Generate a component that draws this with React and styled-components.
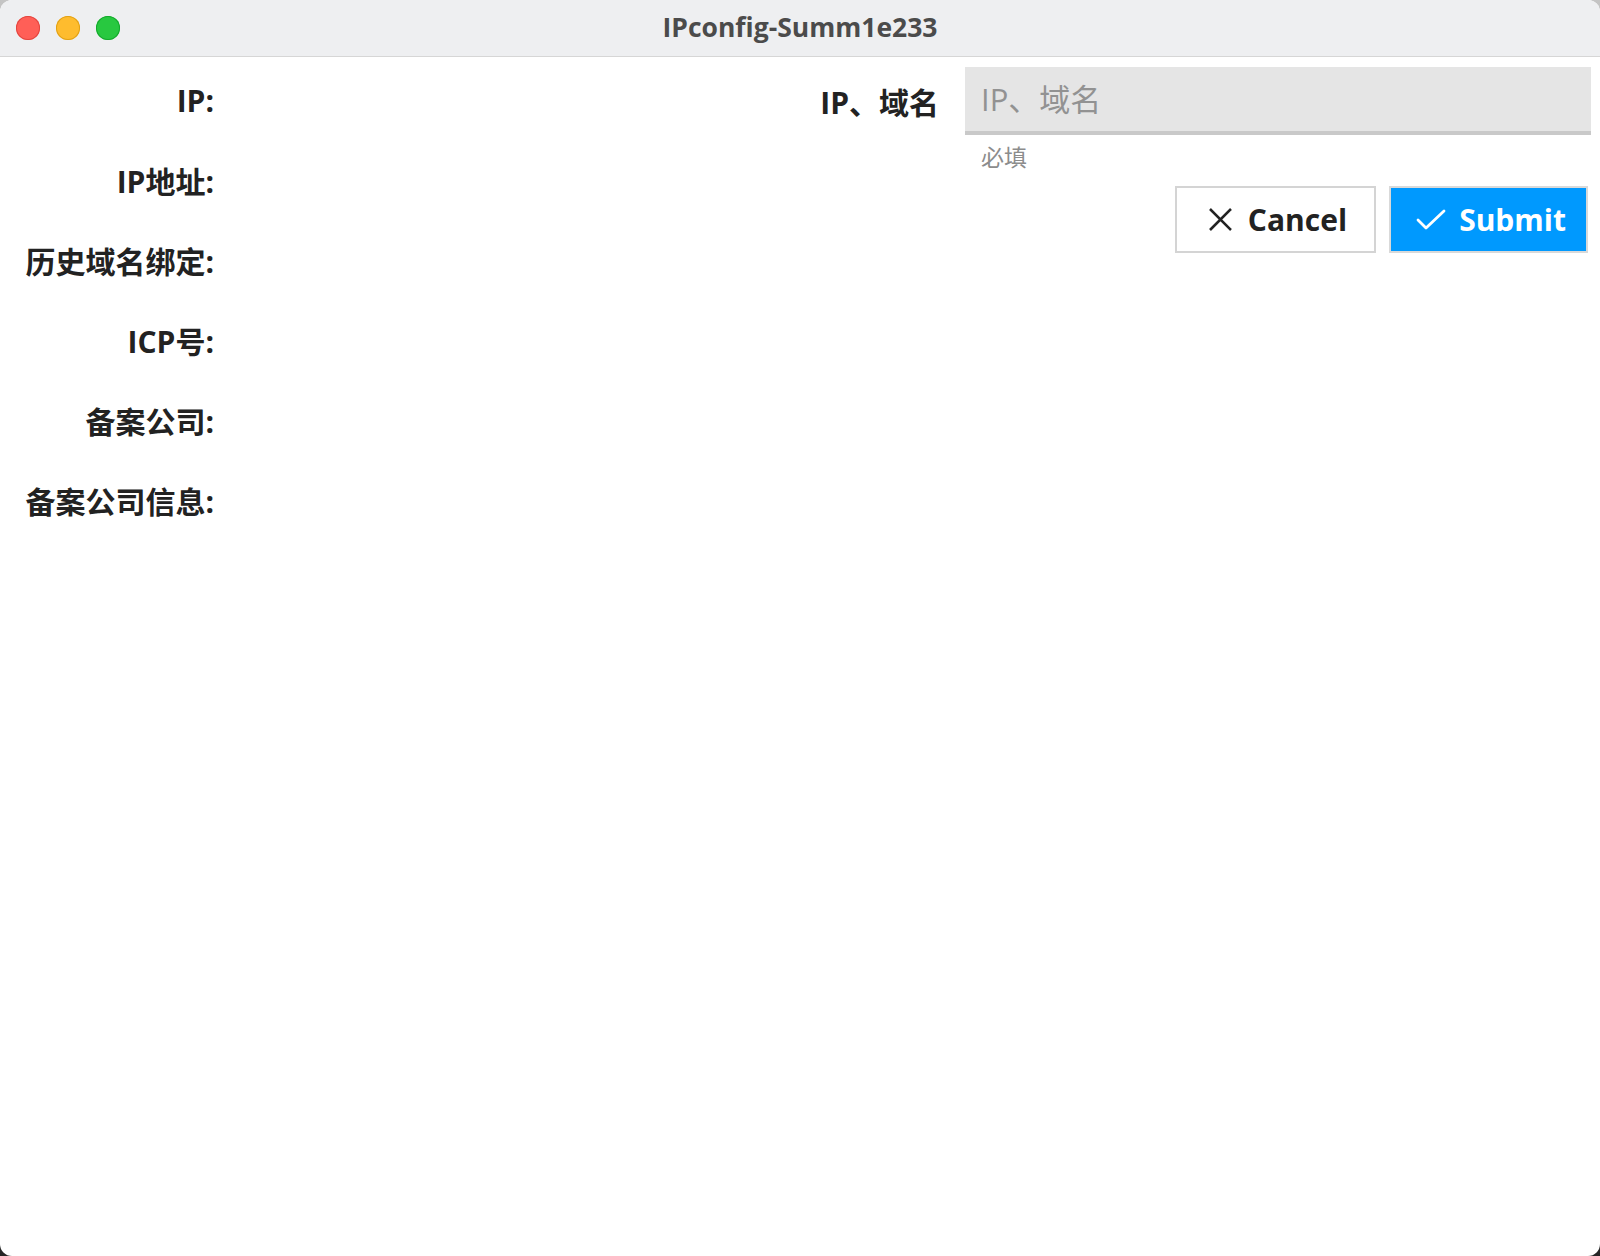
import React, { useState } from 'react';
import styled, { createGlobalStyle } from 'styled-components';

const GlobalStyle = createGlobalStyle`
  html, body {
    margin: 0;
    padding: 0;
    height: 100%;
  }
  body {
    background: linear-gradient(180deg, #c4c4c4 0%, #8a8a8a 50%, #262626 100%);
    font-family: "Open Sans", "Noto Sans CJK SC", sans-serif;
  }
  #root {
    height: 100%;
  }
`;

const FONT = '"Open Sans", "Noto Sans CJK SC", sans-serif';

const Window = styled.div`
  height: 100vh;
  display: flex;
  flex-direction: column;
  background: #ffffff;
  border-radius: 12px;
  overflow: hidden;
`;

const TitleBar = styled.div`
  height: 57px;
  flex-shrink: 0;
  display: grid;
  grid-template-columns: 1fr auto 1fr;
  align-items: center;
  background: #eeeff1;
  border-bottom: 1px solid #d6d6d6;
  box-sizing: border-box;
`;

const Lights = styled.div`
  display: flex;
  gap: 16px;
  padding-left: 16px;
`;

const Light = styled.span`
  width: 24px;
  height: 24px;
  border-radius: 50%;
  background: ${(p) => p.color};
  box-shadow: inset 0 0 0 1px ${(p) => p.edge};
`;

const Title = styled.div`
  font-family: ${FONT};
  font-size: 26.5px;
  font-weight: 700;
  color: #4b4b4b;
  margin-top: -2px;
`;

const Content = styled.div`
  flex: 1;
  display: flex;
  align-items: flex-start;
`;

const LabelColumn = styled.div`
  width: 214px;
  padding-top: 3px;
  display: flex;
  flex-direction: column;
`;

const InfoLabel = styled.div`
  height: 80px;
  display: flex;
  align-items: center;
  justify-content: flex-end;
  font-family: ${FONT};
  font-size: 30px;
  font-weight: 700;
  color: #222222;
  white-space: nowrap;
`;

const Spacer = styled.div`
  flex: 1;
`;

const FormPanel = styled.div`
  display: flex;
  flex-direction: column;
  padding: 10px 9px 0 0;
`;

const FieldRow = styled.div`
  display: flex;
  align-items: flex-start;
`;

const FieldLabel = styled.label`
  height: 68px;
  display: flex;
  align-items: center;
  margin-right: 26px;
  font-family: ${FONT};
  font-size: 30px;
  font-weight: 700;
  color: #222222;
  white-space: nowrap;
`;

const FieldBox = styled.div`
  width: 626px;
  display: flex;
  flex-direction: column;
`;

const Input = styled.input`
  height: 68px;
  box-sizing: border-box;
  border: none;
  border-bottom: 4px solid #c9c9c9;
  background: #e5e5e5;
  padding: 0 16px;
  font-family: ${FONT};
  font-size: 31px;
  font-weight: 400;
  color: #222;
  outline: none;

  &::placeholder {
    color: #929292;
  }
`;

const Helper = styled.div`
  margin-top: 7px;
  padding-left: 16px;
  font-family: ${FONT};
  font-size: 23px;
  line-height: 30px;
  color: #8c8c8c;
`;

const ButtonRow = styled.div`
  display: flex;
  justify-content: flex-end;
  gap: 13px;
  margin-top: 14px;
  padding-right: 3px;
`;

const Button = styled.button`
  height: 67px;
  box-sizing: border-box;
  display: flex;
  align-items: center;
  justify-content: center;
  gap: ${(p) => (p.primary ? '13px' : '16px')};
  padding: ${(p) => (p.primary ? '0 20px 0 25px' : '0 27px 0 32px')};
  border: 2px solid ${(p) => (p.primary ? '#d9d9d9' : '#d4d4d4')};
  background: ${(p) => (p.primary ? '#0099fe' : '#ffffff')};
  color: ${(p) => (p.primary ? '#ffffff' : '#222222')};
  font-family: ${FONT};
  font-size: 30px;
  font-weight: 700;
  cursor: pointer;
`;

const labels = ['IP:', 'IP地址:', '历史域名绑定:', 'ICP号:', '备案公司:', '备案公司信息:'];

const CloseIcon = () => (
  <svg width="23" height="23" viewBox="0 0 24 24" fill="none">
    <path d="M2 2 L22 22 M22 2 L2 22" stroke="#222" strokeWidth="2.7" strokeLinecap="square" />
  </svg>
);

const CheckIcon = () => (
  <svg width="30" height="24" viewBox="0 0 30 24" fill="none">
    <path d="M2 12 L10 20 L28 3" stroke="#fff" strokeWidth="2.8" strokeLinecap="round" strokeLinejoin="round" />
  </svg>
);

const App = () => {
  const [value, setValue] = useState('');

  return (
    <>
      <GlobalStyle />
      <Window>
        <TitleBar>
          <Lights>
            <Light color="#ff5f57" edge="#e2463f" />
            <Light color="#febc2e" edge="#e1a116" />
            <Light color="#28c840" edge="#14a92c" />
          </Lights>
          <Title>IPconfig-Summ1e233</Title>
          <span />
        </TitleBar>
        <Content>
          <LabelColumn>
            {labels.map((label) => (
              <InfoLabel key={label}>{label}</InfoLabel>
            ))}
          </LabelColumn>
          <Spacer />
          <FormPanel>
            <FieldRow>
              <FieldLabel htmlFor="host">IP、域名</FieldLabel>
              <FieldBox>
                <Input
                  id="host"
                  placeholder="IP、域名"
                  value={value}
                  onChange={(e) => setValue(e.target.value)}
                />
                <Helper>必填</Helper>
              </FieldBox>
            </FieldRow>
            <ButtonRow>
              <Button onClick={() => setValue('')}>
                <CloseIcon />
                Cancel
              </Button>
              <Button primary>
                <CheckIcon />
                Submit
              </Button>
            </ButtonRow>
          </FormPanel>
        </Content>
      </Window>
    </>
  );
};

export default App;
